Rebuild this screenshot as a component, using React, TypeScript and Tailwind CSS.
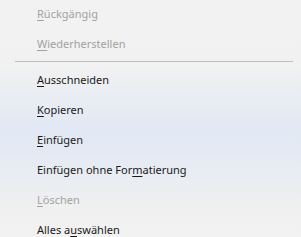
import React from 'react';

type Item = { label: string; key: number; disabled?: boolean } | 'sep';

const items: Item[] = [
    { label: 'Rückgängig', key: 0, disabled: true },
    { label: 'Wiederherstellen', key: 0, disabled: true },
    'sep',
    { label: 'Ausschneiden', key: 0 },
    { label: 'Kopieren', key: 0 },
    { label: 'Einfügen', key: 0 },
    { label: 'Einfügen ohne Formatierung', key: 17 },
    { label: 'Löschen', key: 0, disabled: true },
    { label: 'Alles auswählen', key: 7 },
];

const Label: React.FC<{ text: string; at: number }> = ({ text, at }) => (
    <span>
        {text.slice(0, at)}
        <span className="underline underline-offset-[1.5px] decoration-1">{text[at]}</span>
        {text.slice(at + 1)}
    </span>
);

export default function App() {
    return (
        <div
            className="w-[301px] h-[237px] overflow-hidden bg-[linear-gradient(to_bottom,#f2f2f2_0%,#f1f1f1_28%,#e3e9f4_52%,#e4eaf4_64%,#f0f0f0_88%,#f2f2f2_100%)] text-[11px] leading-none"
            style={{ fontFamily: '"Noto Sans", "Open Sans", sans-serif' }}
        >
            <div className="-mt-[2px] flex flex-col">
                {items.map((it, i) =>
                    it === 'sep' ? (
                        <div key={i} className="h-[6px] pt-[3px] pl-[15px] pr-[8px]">
                            <div className="h-px bg-[#bdbdbd]" />
                        </div>
                    ) : (
                        <div
                            key={i}
                            className={`h-[30px] flex items-center pl-[37px] ${it.disabled ? 'text-[#a2a2a2]' : 'text-[#1a1a1a]'}`}
                        >
                            <Label text={it.label} at={it.key} />
                        </div>
                    )
                )}
            </div>
        </div>
    );
}
